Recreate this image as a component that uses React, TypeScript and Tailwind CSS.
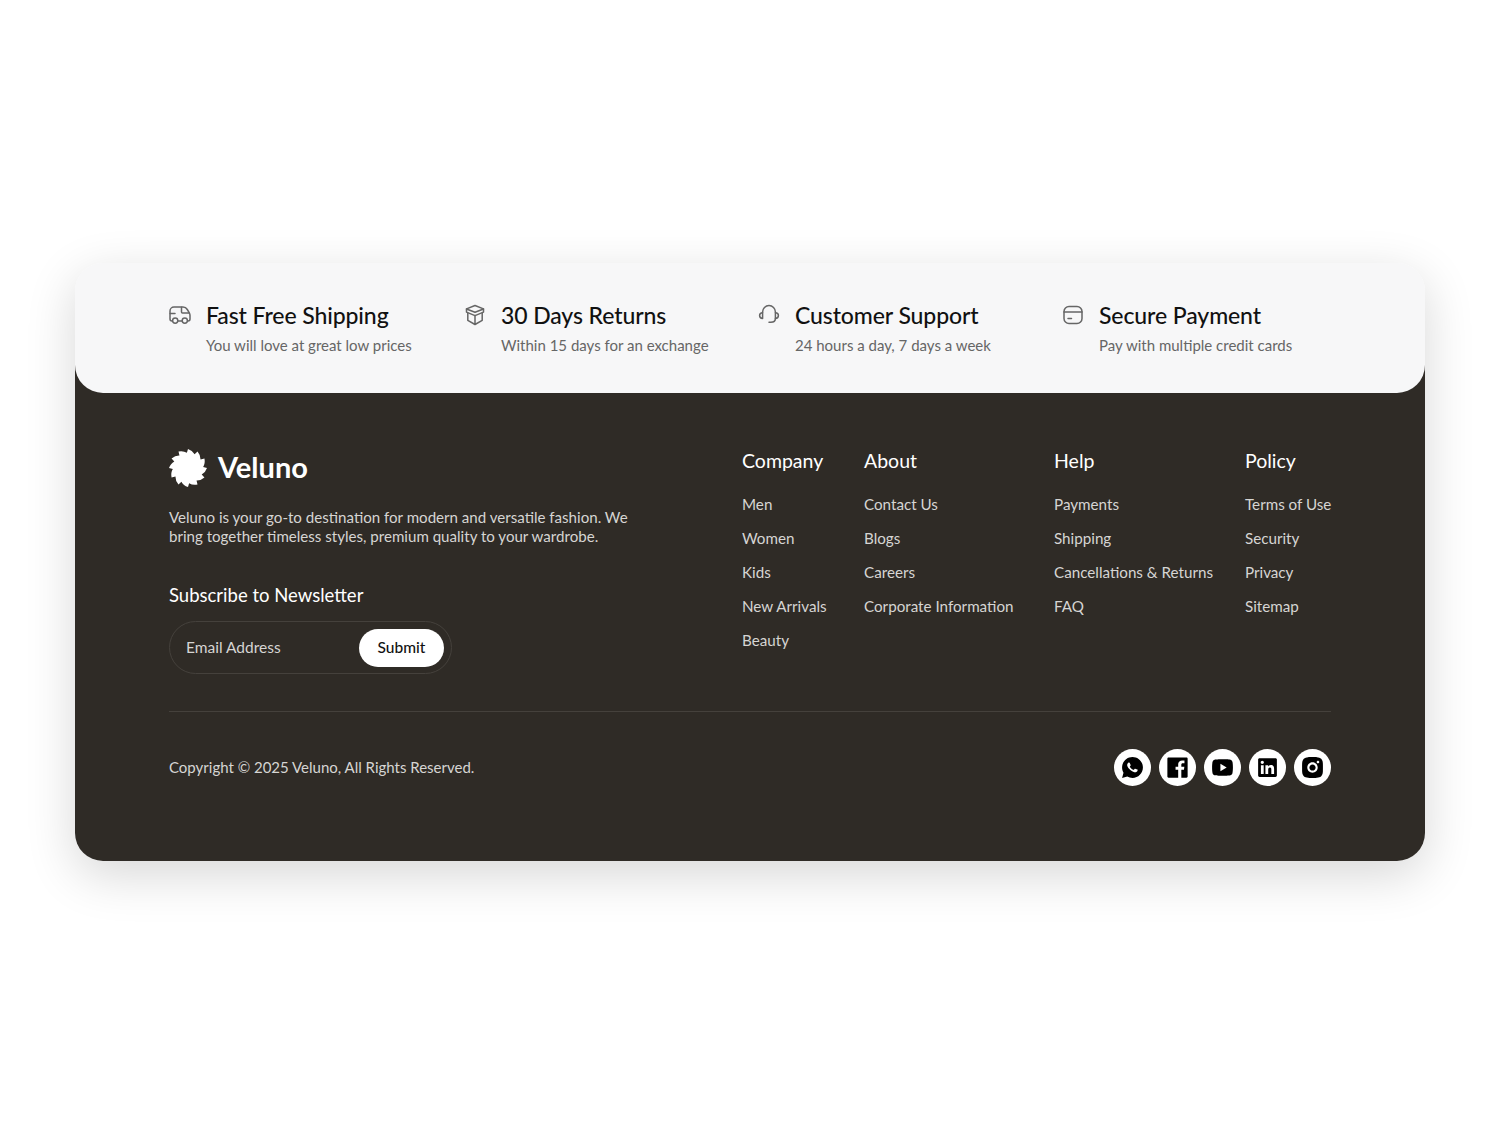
import { RiWhatsappFill, RiFacebookBoxFill, RiYoutubeFill, RiLinkedinBoxFill, RiInstagramFill } from 'react-icons/ri';

const font = { fontFamily: '"Lato", "Liberation Sans", sans-serif' };

// saw blade logo, computed once
const bladePath = (() => {
  const teeth = 12;
  const at = (r: number, t: number) => {
    const a = (t / teeth) * Math.PI * 2;
    return `${(19 + r * Math.cos(a)).toFixed(2)} ${(19 + r * Math.sin(a)).toFixed(2)}`;
  };
  let d = `M${at(19, 0)}`;
  for (let i = 0; i < teeth; i++) {
    d += ` Q${at(18, i + 0.5)} ${at(15.2, i + 0.86)}`;
    d += ` L${at(19, i + 1)}`;
  }
  return d + 'Z';
})();

function TruckIcon() {
  return (
    <svg width="22" height="22" viewBox="0 0 22 22" fill="none" stroke="#666666" strokeWidth="1.5" strokeLinecap="round" strokeLinejoin="round">
      <path d="M3.4 17H3a2 2 0 0 1-2-2V7a4 4 0 0 1 4-4h9c2 0 3.3.8 4.3 2.5l2 3.4c.5.8.7 1.6.7 2.6V15a2 2 0 0 1-2 2h-.4" />
      <path d="M9 17h4" />
      <circle cx="6.2" cy="16.6" r="2.6" />
      <circle cx="15.8" cy="16.6" r="2.6" />
      <path d="M12.5 3.2V8a1 1 0 0 0 1 1h6.7M1.2 9.5H6" />
    </svg>
  );
}

function BoxIcon() {
  return (
    <svg width="22" height="22" viewBox="0 0 22 22" fill="none" stroke="#666666" strokeWidth="1.5" strokeLinecap="round" strokeLinejoin="round">
      <path d="M11 1.5l8.5 3.4v3.2L11 11.6 2.5 8.1V4.9L11 1.5z" />
      <path d="M2.5 5l8.5 3.3L19.500 5" />
      <path d="M3.800 9v7.300L11 20.500l7.200-4.200V9M11 11.600v8.900" />
    </svg>
  );
}

function HeadsetIcon() {
  return (
    <svg width="22" height="22" viewBox="0 0 22 22" fill="none" stroke="#666666" strokeWidth="1.5" strokeLinecap="round" strokeLinejoin="round">
      <path d="M4.600 8.500V8a6.400 6.400 0 0 1 12.800 0v.5" />
      <path d="M4.600 8.800c-1.900 0-3 1.200-3 2.800s1.100 2.900 3 2.900V8.800zM17.400 8.800c1.900 0 3 1.200 3 2.800s-1.100 2.900-3 2.900V8.800z" />
      <path d="M17.400 14.500c0 2.500-1.900 3.800-4.600 3.800H11" />
    </svg>
  );
}

function CardIcon() {
  return (
    <svg width="22" height="22" viewBox="0 0 22 22" fill="none" stroke="#666666" strokeWidth="1.5" strokeLinecap="round" strokeLinejoin="round">
      <rect x="2" y="2.500" width="18" height="17" rx="5" />
      <path d="M2 8h18M6 14.500h3.500" />
    </svg>
  );
}

const features = [
  { icon: <TruckIcon />, title: 'Fast Free Shipping', sub: 'You will love at great low prices', w: 'w-[295px]' },
  { icon: <BoxIcon />, title: '30 Days Returns', sub: 'Within 15 days for an exchange', w: 'w-[294px]' },
  { icon: <HeadsetIcon />, title: 'Customer Support', sub: '24 hours a day, 7 days a week', w: 'w-[304px]' },
  { icon: <CardIcon />, title: 'Secure Payment', sub: 'Pay with multiple credit cards', w: 'w-[269px]' },
];

const columns = [
  { title: 'Company', links: ['Men', 'Women', 'Kids', 'New Arrivals', 'Beauty'] },
  { title: 'About', links: ['Contact Us', 'Blogs', 'Careers', 'Corporate Information'] },
  { title: 'Help', links: ['Payments', 'Shipping', 'Cancellations & Returns', 'FAQ'] },
  { title: 'Policy', links: ['Terms of Use', 'Security', 'Privacy', 'Sitemap'] },
];

const socials = [
  { Icon: RiWhatsappFill, size: 25 },
  { Icon: RiFacebookBoxFill, size: 27 },
  { Icon: RiYoutubeFill, size: 25 },
  { Icon: RiLinkedinBoxFill, size: 25 },
  { Icon: RiInstagramFill, size: 25 },
];

export default function App() {
  return (
    <div className="min-h-screen bg-white flex items-center justify-center pb-[1px]" style={font}>
      <div className="w-[1350px] h-[598px] rounded-[28px] bg-[linear-gradient(#f7f7f8_60px,#2f2b26_60px)] shadow-[0_14px_50px_rgba(0,0,0,0.16)]">
        <div className="h-[130px] bg-[#f7f7f8] rounded-[28px] px-[94px] pt-[36px] flex">
          {features.map((f) => (
            <div key={f.title} className={f.w}>
              <div className="flex items-center gap-[15px] h-[32px]">
                <div className="w-[22px] h-[22px] shrink-0 -mt-[1px]">{f.icon}</div>
                <h3 className="text-[23px] font-medium leading-[32px] tracking-[-0.1px] text-[#111111]">{f.title}</h3>
              </div>
              <p className="ml-[37px] mt-[4px] text-[15px] leading-[20px] text-[#666666]">{f.sub}</p>
            </div>
          ))}
        </div>

        <div className="px-[94px] pt-[56px]">
          <div className="flex h-[263px] border-b border-[#45413c]">
            <div className="w-[573px]">
              <div className="flex items-center gap-[11px] h-[38px]">
                <svg width="38" height="38" viewBox="0 0 38 38" fill="#ffffff"><path d={bladePath} /></svg>
                <span className="text-[29px] font-bold leading-[34px] mb-[3px] text-white">Veluno</span>
              </div>
              <p className="mt-[21px] w-[480px] text-[15.1px] leading-[19px] text-[#d6d5d3]">
                Veluno is your go-to destination for modern and versatile fashion. We bring together timeless styles, premium quality to your wardrobe.
              </p>
              <h4 className="mt-[36px] text-[18.5px] leading-[26px] text-white">Subscribe to Newsletter</h4>
              <div className="mt-[13px] w-[283px] h-[53px] rounded-full border border-[#45413c] pl-[16px] pr-[7px] flex items-center justify-between">
                <span className="text-[15.5px] text-[#d6d5d3]">Email Address</span>
                <button className="w-[85px] h-[38px] rounded-full bg-white text-[15.5px] font-medium text-[#111111]">Submit</button>
              </div>
            </div>
            <div className="flex-1 grid grid-cols-[122px_190px_191px_86px] -mt-[1px] h-[220px]">
              {columns.map((c) => (
                <div key={c.title}>
                  <h4 className="text-[19.5px] leading-[26px] text-white whitespace-nowrap">{c.title}</h4>
                  <ul className="mt-[20px] flex flex-col gap-[14px]">
                    {c.links.map((l) => (
                      <li key={l} className="text-[15.2px] leading-[20px] text-[#d6d5d3] whitespace-nowrap">{l}</li>
                    ))}
                  </ul>
                </div>
              ))}
            </div>
          </div>
          <div className="flex items-center justify-between mt-[37px]">
            <p className="text-[15px] text-[#d6d5d3]">Copyright © 2025 Veluno, All Rights Reserved.</p>
            <div className="flex gap-[8px]">
              {socials.map(({ Icon, size }, i) => (
                <div key={i} className="w-[37px] h-[37px] rounded-full bg-white flex items-center justify-center text-black">
                  <Icon size={size} />
                </div>
              ))}
            </div>
          </div>
        </div>
      </div>
    </div>
  );
}
